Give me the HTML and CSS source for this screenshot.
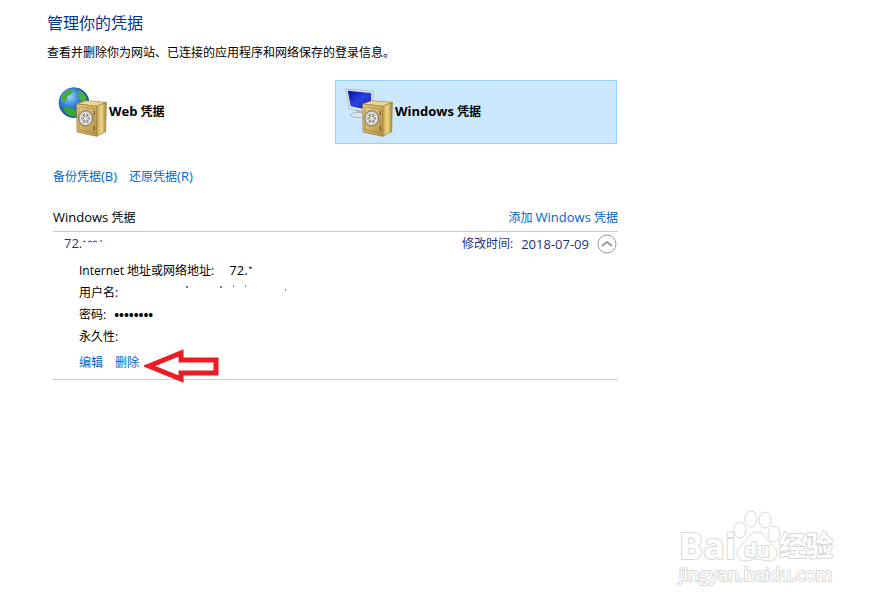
FILE: index.html
```html
<!DOCTYPE html>
<html lang="zh-CN">
<head>
  <meta charset="UTF-8" />
  <title>管理你的凭据</title>
  <link rel="stylesheet" href="styles.css">
</head>
<body>

  <svg class="defs" aria-hidden="true">
    <defs>
      <linearGradient id="gold" x1="0" y1="0" x2="1" y2="1">
        <stop offset="0" stop-color="#ead08a" />
        <stop offset="1" stop-color="#b8953e" />
      </linearGradient>
      <linearGradient id="goldSide" x1="0" y1="0" x2="1" y2="0">
        <stop offset="0" stop-color="#c9a648" />
        <stop offset="0.5" stop-color="#ecd68c" />
        <stop offset="1" stop-color="#a98430" />
      </linearGradient>
      <radialGradient id="sea" cx="0.35" cy="0.3" r="0.75">
        <stop offset="0" stop-color="#9fd4f8" />
        <stop offset="0.45" stop-color="#2f7fd6" />
        <stop offset="1" stop-color="#0b3c8f" />
      </radialGradient>
      <linearGradient id="screen" x1="0" y1="0" x2="1" y2="1">
        <stop offset="0" stop-color="#0a10a0" />
        <stop offset="0.5" stop-color="#2a45e0" />
        <stop offset="1" stop-color="#0508a8" />
      </linearGradient>
      <g id="safe">
        <path d="M80 71 L108 61 L169 66 L140 78 Z" fill="#ecd794" stroke="#a58640" stroke-width="2" />
        <path d="M140 78 L169 66 L167 154 L140 168 Z" fill="url(#goldSide)" stroke="#957633" stroke-width="2" />
        <path d="M80 71 L140 78 L140 168 L81 155 Z" fill="url(#gold)" stroke="#957633" stroke-width="2" />
        <path d="M87 80 L133 85 L133 158 L87 148 Z" fill="none" stroke="#a3823a" stroke-width="2" />
        <path d="M133 92 v12 M133 138 v12" stroke="#7d6226" stroke-width="4" />
        <ellipse cx="107" cy="114" rx="21" ry="23" fill="#c3c1b8" stroke="#77756e" stroke-width="3" />
        <ellipse cx="107" cy="114" rx="15" ry="17" fill="#9b998f" stroke="#e6e5df" stroke-width="4" />
        <path d="M107 95 V133 M91 105 L123 123 M91 123 L123 105" stroke="#efeeea" stroke-width="3" />
        <circle cx="107" cy="114" r="5" fill="#fff" stroke="#77756c" stroke-width="1" />
      </g>
    </defs>
  </svg>

  <main>
    <h1>管理你的凭据</h1>
    <p class="intro">查看并删除你为网站、已连接的应用程序和网络保存的登录信息。</p>

    <div class="vaults">
      <button type="button" class="vault">
        <svg class="vault-icon" viewBox="24 20 147 150" aria-hidden="true">
          <circle cx="72" cy="67" r="45" fill="url(#sea)" stroke="#1c4f94" stroke-width="2" />
          <path d="M34 52 q10 -20 26 -25 l10 6 l-8 10 l-10 4 l-2 12 l-12 8 z" fill="#3fae3b" />
          <path d="M86 30 q18 8 24 24 l-6 14 l-12 -6 l-8 -16 z" fill="#48b03e" />
          <path d="M42 84 l16 -4 l20 10 l2 18 q-24 4 -38 -16 z" fill="#36a436" />
          <use href="#safe" />
        </svg>
        <span><span class="en">Web</span> 凭据</span>
      </button>
      <button type="button" class="vault selected">
        <svg class="vault-icon" viewBox="24 20 147 150" aria-hidden="true">
          <path d="M60 84 L82 90 L84 108 L62 104 Z" fill="#b5bcc6" />
          <ellipse cx="66" cy="104" rx="22" ry="8" fill="#dfe4ea" stroke="#9aa3ad" stroke-width="2" />
          <path d="M29 26 L112 33 L108 98 L39 85 Z" fill="#e6ebf2" stroke="#9aa6b8" stroke-width="2" />
          <path d="M35 31 L106 38 L103 90 L44 78 Z" fill="url(#screen)" />
          <use href="#safe" />
        </svg>
        <span><span class="en">Windows</span> 凭据</span>
      </button>
    </div>

    <nav class="tasks">
      <a href="#backup">备份凭据<span class="en">(B)</span></a>
      <a href="#restore">还原凭据<span class="en">(R)</span></a>
    </nav>

    <section class="credentials">
      <header class="group-head">
        <h2><span class="en">Windows</span> 凭据</h2>
        <a href="#add">添加 <span class="en">Windows</span> 凭据</a>
      </header>

      <article class="entry">
        <div class="entry-head">
          <span class="entry-name"><span class="en">72.</span><svg class="masked" width="26" height="10" aria-hidden="true"><path d="M1 4 l2 -1 v1 M6 4 q2 -2 4 0 M11 4 q2 -2 4 0 M18 3 h2" /></svg></span>
          <span class="modified">修改时间:</span>
          <time class="en" datetime="2018-07-09">2018-07-09</time>
          <button type="button" class="toggle" aria-label="折叠">
            <svg viewBox="0 0 20 20" aria-hidden="true">
              <circle cx="10" cy="10" r="9" />
              <path d="M5 12 L10 8 L15 12" />
            </svg>
          </button>
        </div>

        <dl>
          <div><dt>Internet 地址或网络地址:</dt><dd class="address"><span class="en">72.</span><svg class="masked" width="6" height="10" aria-hidden="true"><path d="M1 3 l2 -1 v2" /></svg></dd></div>
          <div><dt>用户名:</dt><dd><svg class="masked" width="170" height="12" aria-hidden="true"><path d="M60 2 h2 M94 2 h2 M107 1 h1 M119 1 h1 M159 5 h1" /></svg></dd></div>
          <div><dt>密码:</dt><dd class="dots">••••••••</dd></div>
          <div><dt>永久性:</dt><dd></dd></div>
        </dl>

        <div class="actions">
          <a href="#edit">编辑</a>
          <a href="#delete" class="delete">删除
            <svg class="arrow" viewBox="0 0 76 34" aria-hidden="true">
              <path d="M5 17 L37 4 V11 H72 V24 H37 V30 Z" />
            </svg>
          </a>
        </div>
      </article>
    </section>
  </main>

  <footer class="watermark">
    <div class="brand">
      <span class="bai">Bai</span>
      <span class="paw">
        <svg viewBox="0 0 48 52" aria-hidden="true">
          <ellipse cx="7" cy="20" rx="6" ry="8" />
          <ellipse cx="18" cy="9" rx="6" ry="8" />
          <ellipse cx="32" cy="10" rx="6" ry="8" />
          <ellipse cx="41" cy="24" rx="6" ry="8" />
          <path d="M24 22 C16 22 14 31 8 36 C1 42 4 51 12 51 C18 51 19 49 24 49 C29 49 31 51 36 51 C44 51 47 42 40 36 C34 31 32 22 24 22 Z" />
        </svg>
        <span class="du">du</span>
      </span>
      <span class="jingyan">经验</span>
    </div>
    <div class="site">jingyan.baidu.com</div>
  </footer>

</body>
</html>
```
FILE: styles.css
```css
body {
  font-family: "Open Sans", "Noto Sans CJK SC", sans-serif;
  font-size: 12px;
  line-height: 20px;
  margin: 0;
  background: #fff;
  color: #000;
  min-height: 100vh;
  position: relative;
}

main {
  max-width: 571px;
  padding: 11px 20px 12px 47px;
}

a {
  color: #0066cc;
  text-decoration: none;
}

a:hover {
  text-decoration: underline;
}

button {
  font: inherit;
  color: inherit;
  cursor: pointer;
}

h1 {
  font-size: 16px;
  font-weight: normal;
  line-height: 24px;
  color: #003399;
  margin: 0;
}

.defs {
  position: absolute;
  width: 0;
  height: 0;
}

/* latin text runs a size larger than the chinese */
.en {
  font-size: 13px;
  line-height: 1;
}

.intro {
  margin: 8px 0 17px;
}

.vaults {
  display: flex;
  gap: 4px;
  margin: 0 1px 0 2px;
}

.vault {
  flex: 1;
  display: flex;
  align-items: center;
  gap: 2px;
  height: 64px;
  padding: 0 8px;
  background: none;
  border: 1px solid transparent;
  font-weight: bold;
}

.vault.selected {
  background: #cce8ff;
  border-color: #99d1ff;
}

.vault-icon {
  width: 49px;
  height: 50px;
}

.tasks {
  display: flex;
  gap: 12px;
  margin: 23px 6px 0;
}

.credentials {
  margin: 21px 0 0 6px;
}

.group-head {
  display: flex;
  justify-content: space-between;
  padding-bottom: 3px;
  border-bottom: 1px solid #ccc;
}

h2 {
  font-size: 12px;
  font-weight: normal;
  margin: 0;
}

.entry {
  border-bottom: 1px solid #ccc;
  padding-bottom: 6px;
}

.entry-head {
  display: flex;
  align-items: center;
  gap: 8px;
  padding: 2px 1px 4px 11px;
  color: #1f2f86;
}

.entry-name {
  margin-right: auto;
}

.masked {
  fill: none;
  stroke: currentColor;
}

.toggle {
  width: 20px;
  height: 20px;
  padding: 0;
  border: 0;
  background: none;
}

.toggle svg {
  display: block;
  fill: none;
  stroke: #999;
}

.toggle path {
  stroke-width: 2;
}

dl {
  margin: 2px 0 0 26px;
}

dl div {
  display: flex;
  gap: 8px;
  height: 22px;
  align-items: center;
}

dd {
  margin: 0;
}

.address {
  margin-left: 7px;
}

.dots {
  font-size: 13px;
  font-weight: bold;
}

.actions {
  display: flex;
  gap: 12px;
  margin: 5px 0 0 26px;
}

.delete {
  position: relative;
}

.arrow {
  position: absolute;
  left: 29px;
  top: -4px;
  width: 76px;
  height: 34px;
  fill: #fff;
  stroke: #ed1c24;
  stroke-width: 5;
}

.watermark {
  position: absolute;
  right: 48px;
  bottom: 18px;
  color: #fff;
  -webkit-text-stroke: 2px #d8d8d8;
  paint-order: stroke fill;
}

.brand {
  display: flex;
  align-items: flex-end;
  line-height: 32px;
}

.bai {
  font: bold 36px/32px "Open Sans", sans-serif;
}

.paw {
  position: relative;
  width: 48px;
  height: 52px;
  margin: 0 -2px 0 -3px;
}

.paw svg {
  display: block;
  width: 48px;
  height: 52px;
  overflow: visible;
  fill: #fff;
  stroke: #d8d8d8;
  stroke-width: 1;
  paint-order: normal;
}

.du {
  position: absolute;
  left: 11px;
  bottom: 0;
  font: bold 20px/24px "Open Sans", sans-serif;
}

.jingyan {
  font-size: 27px;
  font-weight: bold;
}

.site {
  font-size: 18px;
  line-height: 24px;
}
```
